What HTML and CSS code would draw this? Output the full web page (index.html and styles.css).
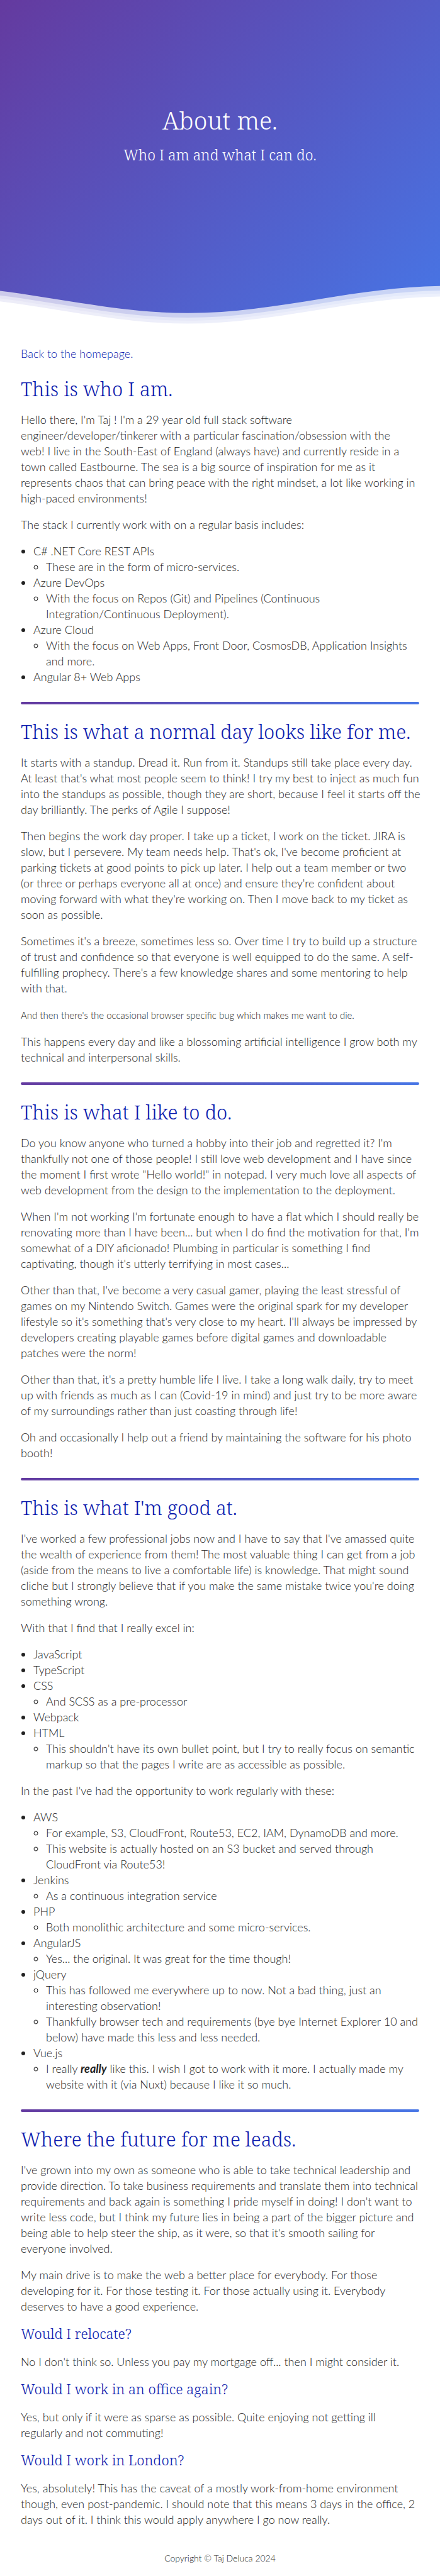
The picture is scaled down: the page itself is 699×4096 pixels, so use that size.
FILE: index.html
```html
<!DOCTYPE html>
<html lang="en">
<head>
<meta charset="utf-8">
<meta name="viewport" content="width=device-width, initial-scale=1">
<title>About me.</title>
<link rel="stylesheet" href="styles.css">
</head>
<body>
<header class="hero">
  <div class="hero-text">
    <h1 class="hero-title">About me.</h1>
    <p class="hero-subtitle">Who I am and what I can do.</p>
  </div>
  <svg class="waves" viewBox="0 24 150 28" preserveAspectRatio="none" aria-hidden="true">
    <defs>
      <path id="wave" d="M-160 44c30 0 58-18 88-18s58 18 88 18 58-18 88-18 58 18 88 18v44h-352z"/>
    </defs>
    <use href="#wave" x="48" y="0" fill="#fff" fill-opacity=".7"/>
    <use href="#wave" x="48" y="3" fill="#fff" fill-opacity=".5"/>
    <use href="#wave" x="48" y="5" fill="#fff" fill-opacity=".3"/>
    <use href="#wave" x="48" y="7" fill="#fff"/>
  </svg>
</header>
<main class="content">
  <a class="back-link" href="#">Back to the homepage.</a>

  <section class="section">
    <h2>This is who I am.</h2>
    <p>Hello there, I'm Taj ! I'm a 29 year old full stack software engineer/developer/tinkerer with a particular fascination/obsession with the<br>web! I live in the South-East of England (always have) and currently reside in a<br>town called Eastbourne. The sea is a big source of inspiration for me as it<br>represents chaos that can bring peace with the right mindset, a lot like working in<br>high-paced environments!</p>
    <p>The stack I currently work with on a regular basis includes:</p>
    <ul>
      <li>C# .NET Core REST APIs
        <ul><li>These are in the form of micro-services.</li></ul>
      </li>
      <li>Azure DevOps
        <ul><li>With the focus on Repos (Git) and Pipelines (Continuous Integration/Continuous Deployment).</li></ul>
      </li>
      <li>Azure Cloud
        <ul><li>With the focus on Web Apps, Front Door, CosmosDB, Application Insights<br>and more.</li></ul>
      </li>
      <li>Angular 8+ Web Apps</li>
    </ul>
  </section>
  <hr class="divider">

  <section class="section">
    <h2>This is what a normal day looks like for me.</h2>
    <p>It starts with a standup. Dread it. Run from it. Standups still take place every day. At least that's what most people seem to think! I try my best to inject as much fun into the standups as possible, though they are short, because I feel it starts off the day brilliantly. The perks of Agile I suppose!</p>
    <p>Then begins the work day proper. I take up a ticket, I work on the ticket. JIRA is<br>slow, but I persevere. My team needs help. That's ok, I've become proficient at<br>parking tickets at good points to pick up later. I help out a team member or two<br>(or three or perhaps everyone all at once) and ensure they're confident about<br>moving forward with what they're working on. Then I move back to my ticket as<br>soon as possible.</p>
    <p>Sometimes it's a breeze, sometimes less so. Over time I try to build up a structure<br>of trust and confidence so that everyone is well equipped to do the same. A self-fulfilling prophecy. There's a few knowledge shares and some mentoring to help<br>with that.</p>
    <p><small>And then there's the occasional browser specific bug which makes me want to die.</small></p>
    <p>This happens every day and like a blossoming artificial intelligence I grow both my technical and interpersonal skills.</p>
  </section>
  <hr class="divider">

  <section class="section">
    <h2>This is what I like to do.</h2>
    <p>Do you know anyone who turned a hobby into their job and regretted it? I'm<br>thankfully not one of those people! I still love web development and I have since<br>the moment I first wrote "Hello world!" in notepad. I very much love all aspects of<br>web development from the design to the implementation to the deployment.</p>
    <p>When I'm not working I'm fortunate enough to have a flat which I should really be<br>renovating more than I have been... but when I do find the motivation for that, I'm<br>somewhat of a DIY aficionado! Plumbing in particular is something I find<br>captivating, though it's utterly terrifying in most cases...</p>
    <p>Other than that, I've become a very casual gamer, playing the least stressful of<br>games on my Nintendo Switch. Games were the original spark for my developer<br>lifestyle so it's something that's very close to my heart. I'll always be impressed by<br>developers creating playable games before digital games and downloadable<br>patches were the norm!</p>
    <p>Other than that, it's a pretty humble life I live. I take a long walk daily, try to meet<br>up with friends as much as I can (Covid-19 in mind) and just try to be more aware<br>of my surroundings rather than just coasting through life!</p>
    <p>Oh and occasionally I help out a friend by maintaining the software for his photo<br>booth!</p>
  </section>
  <hr class="divider">

  <section class="section">
    <h2>This is what I'm good at.</h2>
    <p>I've worked a few professional jobs now and I have to say that I've amassed quite<br>the wealth of experience from them! The most valuable thing I can get from a job<br>(aside from the means to live a comfortable life) is knowledge. That might sound<br>cliche but I strongly believe that if you make the same mistake twice you're doing<br>something wrong.</p>
    <p>With that I find that I really excel in:</p>
    <ul>
      <li>JavaScript</li>
      <li>TypeScript</li>
      <li>CSS
        <ul><li>And SCSS as a pre-processor</li></ul>
      </li>
      <li>Webpack</li>
      <li>HTML
        <ul><li>This shouldn't have its own bullet point, but I try to really focus on semantic<br>markup so that the pages I write are as accessible as possible.</li></ul>
      </li>
    </ul>
    <p>In the past I've had the opportunity to work regularly with these:</p>
    <ul>
      <li>AWS
        <ul>
          <li>For example, S3, CloudFront, Route53, EC2, IAM, DynamoDB and more.</li>
          <li>This website is actually hosted on an S3 bucket and served through<br>CloudFront via Route53!</li>
        </ul>
      </li>
      <li>Jenkins
        <ul><li>As a continuous integration service</li></ul>
      </li>
      <li>PHP
        <ul><li>Both monolithic architecture and some micro-services.</li></ul>
      </li>
      <li>AngularJS
        <ul><li>Yes... the original. It was great for the time though!</li></ul>
      </li>
      <li>jQuery
        <ul>
          <li>This has followed me everywhere up to now. Not a bad thing, just an<br>interesting observation!</li>
          <li>Thankfully browser tech and requirements (bye bye Internet Explorer 10 and<br>below) have made this less and less needed.</li>
        </ul>
      </li>
      <li>Vue.js
        <ul><li>I really <strong><em>really</em></strong> like this. I wish I got to work with it more. I actually made my<br>website with it (via Nuxt) because I like it so much.</li></ul>
      </li>
    </ul>
  </section>
  <hr class="divider">

  <section class="section">
    <h2>Where the future for me leads.</h2>
    <p>I've grown into my own as someone who is able to take technical leadership and<br>provide direction. To take business requirements and translate them into technical<br>requirements and back again is something I pride myself in doing! I don't want to<br>write less code, but I think my future lies in being a part of the bigger picture and<br>being able to help steer the ship, as it were, so that it's smooth sailing for<br>everyone involved.</p>
    <p>My main drive is to make the web a better place for everybody. For those<br>developing for it. For those testing it. For those actually using it. Everybody<br>deserves to have a good experience.</p>
    <h3>Would I relocate?</h3>
    <p>No I don't think so. Unless you pay my mortgage off... then I might consider it.</p>
    <h3>Would I work in an office again?</h3>
    <p>Yes, but only if it were as sparse as possible. Quite enjoying not getting ill<br>regularly and not commuting!</p>
    <h3>Would I work in London?</h3>
    <p>Yes, absolutely! This has the caveat of a mostly work-from-home environment<br>though, even post-pandemic. I should note that this means 3 days in the office, 2<br>days out of it. I think this would apply anywhere I go now really.</p>
  </section>
</main>
<footer class="footer">Copyright © Taj Deluca 2024</footer>
</body>
</html>
```

FILE: styles.css
```css
* {
  box-sizing: border-box;
}

body {
  margin: 0;
  background: #fff;
  color: #222;
  font: 300 18px/25px Lato, "Liberation Sans", sans-serif;
}

h1,
h2,
h3,
p,
ul {
  margin: 0;
}

h1,
h2,
h3,
.hero-subtitle {
  font-family: "Noto Serif", "DejaVu Serif", serif;
  font-weight: 300;
}

.hero {
  display: flex;
  flex-direction: column;
  color: #fff;
  text-align: center;
  background: linear-gradient(135deg, #643a9f, #4776e6);
}

.hero-text {
  padding: 167px 32px 188px;
}

.hero-title {
  margin-bottom: 15px;
  font-size: 39px;
  line-height: 48px;
}

.hero-subtitle {
  font-size: 23px;
  line-height: 32px;
}

.waves {
  display: block;
  width: 100%;
  height: 67px;
}

.content {
  padding: 33px 33px 0;
}

.back-link {
  display: block;
  margin-bottom: 24px;
  color: #0d1cae;
  text-decoration: none;
}

h2,
h3 {
  color: #0d1cae;
}

h2 {
  margin-bottom: 18px;
  font-size: 31px;
  line-height: 38px;
}

h3 {
  margin-bottom: 18px;
  font-size: 22px;
  line-height: 30px;
}

/* Long lines may run slightly past the divider's right end. */
.section p {
  margin-right: -8px;
}

.section p + p,
.section p + ul,
.section ul + p {
  margin-top: 17px;
}

.section p + h3 {
  margin-top: 15px;
}

ul {
  padding-left: 20px;
}

small {
  font-size: 15px;
}

strong {
  font-weight: 700;
}

.divider {
  height: 4px;
  margin: 27px 0 24px;
  border: 0;
  border-radius: 2px;
  background: linear-gradient(90deg, #643a9f, #4776e6);
}

.footer {
  padding: 39px 33px 20px;
  font-size: 14px;
  line-height: 20px;
  text-align: center;
}
```
